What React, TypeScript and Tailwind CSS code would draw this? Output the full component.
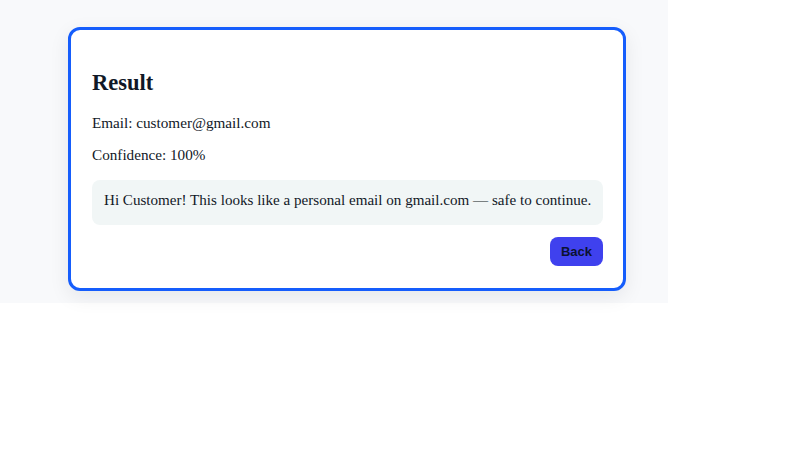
export default function App() {
  return (
    <div className="min-h-[453px] bg-white">
      <div className="w-[668px] bg-[#f8f9fb] pt-[27px] pb-[12px] pl-[68px]">
        <div
          className="w-[558px] h-[264px] rounded-[12px] border-[3px] border-[#155dfc] bg-white pl-[21px] pr-[20px] pt-[20px] shadow-[0_6px_20px_rgba(15,23,42,0.08)] text-[#111827]"
          style={{ fontFamily: '"Liberation Serif", "Times New Roman", serif' }}
        >
          <h2 className="mt-[16px] text-[22.5px] leading-[34px] font-bold">Result</h2>
          <p className="mt-[12px] text-[15.2px] leading-[22px]">Email: customer@gmail.com</p>
          <p className="mt-[10px] text-[15.2px] leading-[22px]">Confidence: 100%</p>
          <div className="mt-[14px] rounded-[8px] bg-[#f1f6f6] pl-[12px] pr-[8px] pt-[9px] pb-[13px] text-[15.1px] leading-[23px]">
            Hi Customer! This looks like a personal email on gmail.com — safe to continue.
          </div>
          <div className="mt-[12px] flex justify-end">
            <button
              className="h-[29px] w-[53px] rounded-[8px] bg-[#3f41ee] text-[13px] font-bold text-[#0b1230]"
              style={{ fontFamily: '"Liberation Sans", Arial, sans-serif' }}
            >
              Back
            </button>
          </div>
        </div>
      </div>
    </div>
  );
}
